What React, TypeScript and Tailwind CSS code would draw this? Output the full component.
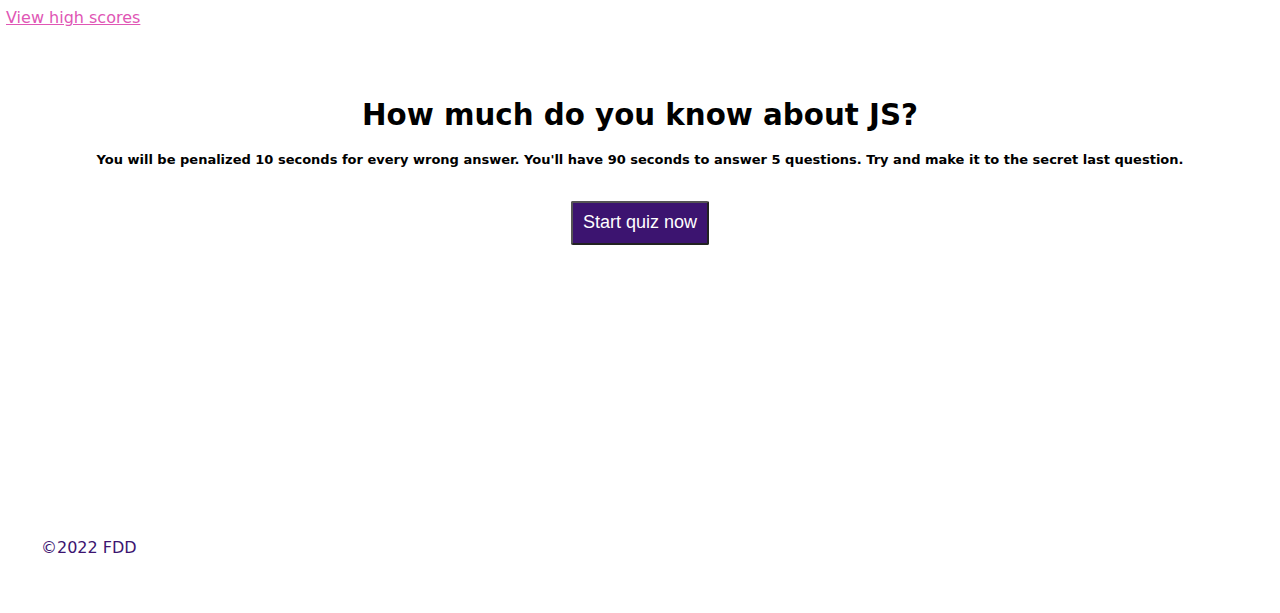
import React from "react"

const App: React.FC = () => {
  return (
    <div className="h-[613px] flex flex-col bg-white font-['DejaVu_Sans',Verdana,sans-serif] text-black">
      <header className="px-[6px] pt-[6px]">
        <a href="#" className="text-[16px] leading-[24px] text-[#e056b5] underline">
          View high scores
        </a>
      </header>

      <main className="flex flex-col items-center text-center mt-[67px]">
        <h1 className="text-[29.3px] leading-[36px] font-bold">How much do you know about JS?</h1>
        <p className="mt-[17px] text-[13px] font-bold">
          You will be penalized 10 seconds for every wrong answer. You'll have 90 seconds to answer 5 questions. Try and make it to the secret last question.
        </p>
        <button className="mt-[31px] h-[44px] px-[10px] bg-[#3c1470] text-white text-[18px] font-['Liberation_Sans',Arial,sans-serif] border-2 border-[#555] border-b-[#222] border-r-[#222] rounded-[2px]">
          Start quiz now
        </button>
      </main>

      <footer className="mt-auto mb-[53px] px-[41px] text-[16px] text-[#3c1470]">©2022 FDD</footer>
    </div>
  )
}

export default App
